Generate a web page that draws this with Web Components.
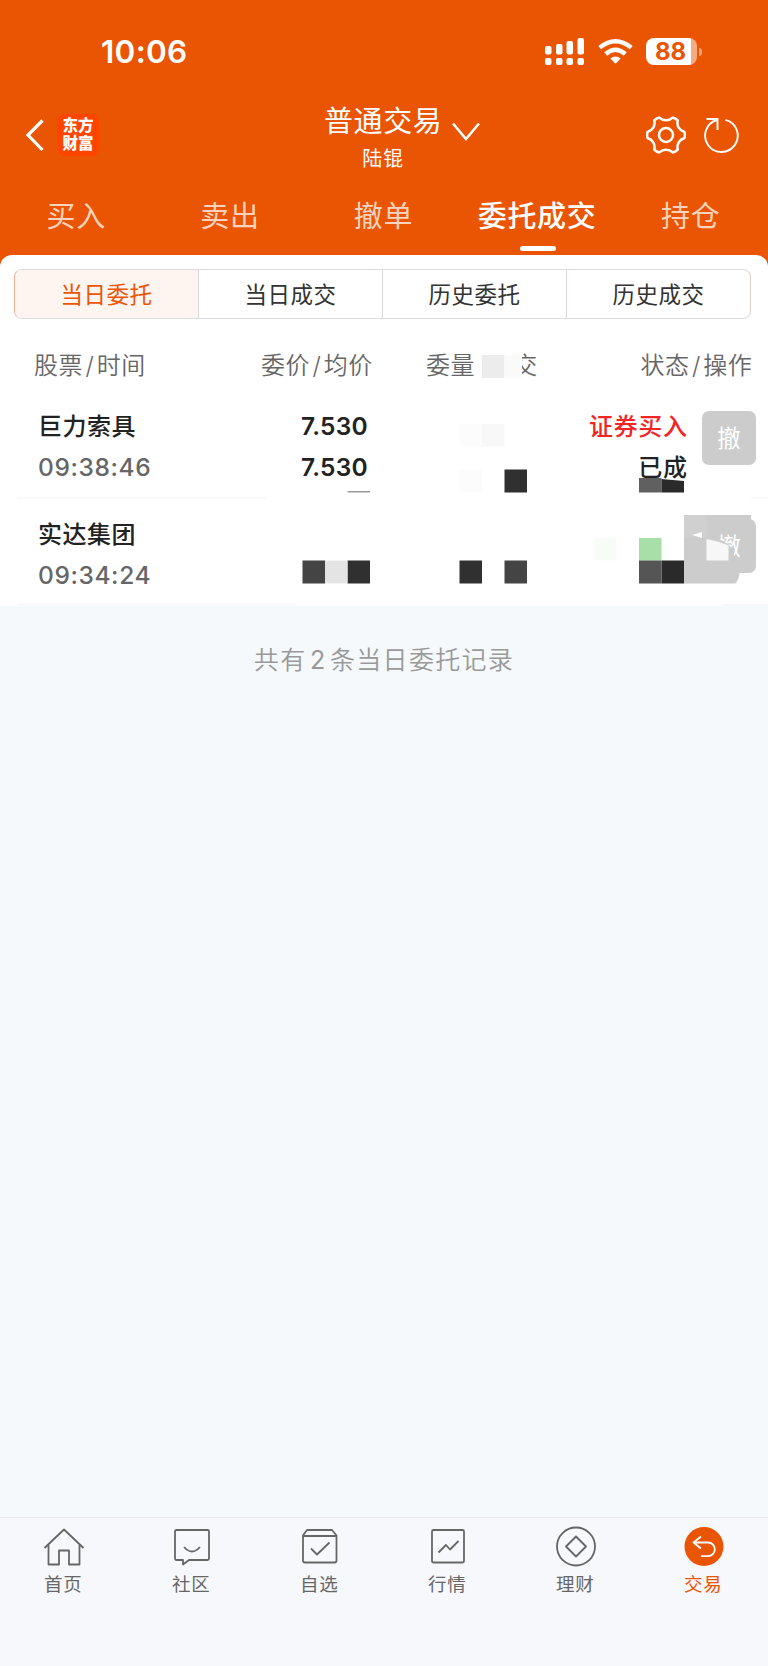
<!DOCTYPE html>
<html lang="zh-CN">
<head>
<meta charset="utf-8">
<title>普通交易</title>
<style>
    body {
        margin: 0;
        background: #f5f9fb;
        font-family: Inter, "Noto Sans CJK SC", sans-serif;
    }
</style>
</head>
<body>
<trade-app></trade-app>

<script>
// Small helper: every element clones its own template into an open root
class BaseElement extends HTMLElement {
    constructor() {
        super();
        const template = document.createElement('template');
        template.innerHTML = this.constructor.markup;
        this.attachShadow({ mode: 'open' });
        this.shadowRoot.appendChild(template.content.cloneNode(true));
    }
}

class StatusBar extends BaseElement {}
StatusBar.markup = `
  <style>
    :host {
        display: flex;
        align-items: center;
        justify-content: space-between;
        height: 103px;
        box-sizing: border-box;
        padding: 0 66px 0 101px;
        color: #fff;
    }
    .time {
        font-size: 31.5px;
        font-weight: 600;
        line-height: 40px;
        letter-spacing: 0.3px;
        padding-top: 1px;
    }
    .system { display: flex; align-items: center; gap: 13px; }
    svg { display: block; }
    .battery {
        display: flex;
        align-items: center;
        gap: 2px;
    }
    .level {
        width: 51px;
        height: 27px;
        border-radius: 8px;
        background: linear-gradient(90deg, #fff 44.5px, #f7ab80 44.5px);
        color: #ea5504;
        font-size: 24px;
        line-height: 28px;
        font-weight: 650;
        text-indent: 9px;
    }
    .nub { width: 3px; height: 8px; border-radius: 0 4px 4px 0; background: #f4a176; }
  </style>
  <span class="time">10:06</span>
  <div class="system">
    <svg width="40" height="27" viewBox="0 0 40 27" fill="#fff">
      <rect x="0" y="8" width="6.500" height="8.500" rx="2"/>
      <rect x="11" y="6" width="6.500" height="10.500" rx="2"/>
      <rect x="21.500" y="3" width="6.500" height="13.500" rx="2"/>
      <rect x="32.500" y="0" width="6.500" height="16.500" rx="2"/>
      <rect x="0" y="20" width="6.500" height="7" rx="2"/>
      <rect x="11" y="20" width="6.500" height="7" rx="2"/>
      <rect x="21.500" y="20" width="6.500" height="7" rx="2"/>
      <rect x="32.500" y="20" width="6.500" height="7" rx="2"/>
    </svg>
    <svg width="35" height="27" viewBox="0 0 35 27" fill="none" stroke="#fff" stroke-width="4.400">
      <path d="M1.700 9.600Q17.500 -3.200 33.300 9.600"/>
      <path d="M7.700 16Q17.500 7.600 27.300 16"/>
      <path d="M12.300 20.500Q17.500 16.300 22.700 20.500L17.500 25.800Z" fill="#fff" stroke="none"/>
    </svg>
    <div class="battery">
      <div class="level">88</div>
      <div class="nub"></div>
    </div>
  </div>
`;

// Six-lobed gear outline around (20, 20)
function gearPath() {
    const at = (r, deg) => {
        const a = deg * Math.PI / 180;
        return (20 + r * Math.cos(a)).toFixed(2) + ' ' + (20 + r * Math.sin(a)).toFixed(2);
    };
    let d = 'M' + at(18.7, -9);
    for (let a = 0; a < 360; a += 60) {
        d += 'Q' + at(19.3, a) + ' ' + at(18.7, a + 9);
        d += 'C' + at(16.8, a + 12) + ' ' + at(14.9, a + 20) + ' ' + at(14.7, a + 30);
        d += 'C' + at(14.9, a + 40) + ' ' + at(16.8, a + 48) + ' ' + at(18.7, a + 51);
    }
    return d + 'Z';
}

class NavHeader extends BaseElement {}
NavHeader.markup = `
  <style>
    :host {
        display: grid;
        grid-template-columns: 1fr auto 1fr;
        height: 78px;
        box-sizing: border-box;
        padding: 0 28px 0 25px;
        color: #fff;
    }
    svg { display: block; fill: none; stroke: #fff; }
    .left { display: flex; align-items: center; gap: 13px; padding-bottom: 14px; }
    .logo {
        width: 42px;
        height: 42px;
        box-sizing: border-box;
        padding-top: 3px;
        border-radius: 8px;
        background: #ff4400;
        font: 900 15.500px/18px "Liberation Sans", "Noto Sans CJK SC", sans-serif;
        text-align: center;
    }
    .center { width: 160px; display: flex; gap: 9.500px; margin-left: 4px; }
    .titles { margin-left: 19.500px; padding-top: 2px; text-align: center; white-space: nowrap; }
    .title { font-size: 29px; line-height: 34px; letter-spacing: 0.600px; }
    .account { font-size: 20px; line-height: 24px; letter-spacing: 1px; margin-top: 8px; }
    .center svg { margin-top: 19px; flex: none; }
    .right { display: flex; align-items: center; justify-content: flex-end; gap: 18.500px; padding-bottom: 14px; }
  </style>
  <div class="left">
    <svg width="19" height="34" viewBox="0 0 19 34" stroke-width="3.200"><path d="M17.500 2.500L3 17L17.500 32"/></svg>
    <div class="logo">东方<br>财富</div>
  </div>
  <div class="center">
    <div class="titles">
      <div class="title"><slot name="title"></slot></div>
      <div class="account"><slot name="account"></slot></div>
    </div>
    <svg width="28" height="20" viewBox="0 0 28 20" stroke-width="2.500"><path d="M1 1.500L14 17L27 1.500"/></svg>
  </div>
  <div class="right">
    <svg width="40" height="40" viewBox="0 0 40 40" stroke-width="2.500" stroke-linejoin="round">
      <path d="${gearPath()}"/>
      <circle cx="20" cy="20" r="7"/>
    </svg>
    <svg width="36" height="38" viewBox="0 0 36 38" stroke-width="1.900">
      <path d="M21.500 3.900A16.300 16.300 0 1 1 13 4"/>
      <path d="M2.500 3H13.500V14"/>
    </svg>
  </div>
`;

class PageTabs extends BaseElement {}
PageTabs.markup = `
  <style>
    :host { display: grid; grid-template-columns: repeat(5, 1fr); height: 74px; }
    ::slotted(span) {
        font-size: 29px;
        line-height: 71px;
        letter-spacing: 0.700px;
        text-align: center;
        white-space: nowrap;
        color: #fbd3bd;
        text-indent: -1px;
    }
    ::slotted(.active) {
        color: #fff;
        font-weight: 500;
    }
    .mark {
        grid-column: 4;
        width: 36px;
        height: 5.500px;
        margin: -8px auto 0;
        border-radius: 3px;
        background: #fff;
    }
  </style>
  <slot></slot>
  <div class="mark"></div>
`;

class SegmentControl extends BaseElement {}
SegmentControl.markup = `
  <style>
    :host {
        display: grid;
        grid-template-columns: 183px 184px 184px 1fr;
        height: 50px;
        box-sizing: border-box;
        margin: 0 17px 0 14px;
        border: 1.500px solid #dcdce2;
        border-left-color: #edaf90;
        border-right-color: #e0cfc8;
        border-radius: 8px;
        overflow: hidden;
    }
    ::slotted(span) {
        font-size: 22.500px;
        line-height: 49px;
        letter-spacing: 0.500px;
        text-align: center;
        color: #333;
        border-left: 1px solid #d9dae0;
    }
    ::slotted(.active) { color: #ea5504; background: #fef5f1; border-left: 0; }
  </style>
  <slot></slot>
`;

class OrderHead extends BaseElement {}
OrderHead.markup = `
  <style>
    :host {
        display: grid;
        grid-template-columns: 227px 165px 214.500px 1fr;
        height: 71px;
        box-sizing: border-box;
        padding: 12px 14px 0 34px;
        font-size: 24px;
        font-weight: 350;
        line-height: 70px;
        letter-spacing: 0.500px;
        color: #666;
        white-space: nowrap;
    }
    i { font-style: normal; padding: 0 2.500px; }
    .hidden { visibility: hidden; }
  </style>
  <span>股票<i>/</i>时间</span>
  <span>委价<i>/</i>均价</span>
  <span>委量<i class="hidden">/</i><span class="hidden">成</span>交</span>
  <span>状态<i>/</i>操作</span>
`;

class OrderRow extends BaseElement {}
OrderRow.markup = `
  <style>
    :host {
        display: grid;
        grid-template-columns: 263px 164px 1fr 54px;
        height: 107.500px;
        box-sizing: border-box;
        padding: 16px 12px 0 38px;
        font-size: 24px;
        line-height: 41px;
        color: #222;
        white-space: nowrap;
    }
    .name { font-weight: 500; letter-spacing: 0.500px; }
    .time { color: #666; font-weight: 500; font-size: 24.500px; letter-spacing: 0.600px; }
    .price { font-weight: 600; font-size: 24.500px; letter-spacing: 0.200px; }
    .state { text-align: right; padding-right: 14.500px; font-weight: 500; letter-spacing: 0.600px; }
    .side { color: #f22424; }
    button {
        width: 54px;
        height: 54px;
        margin: 5px 0 0;
        padding: 0 0 1px;
        border: 0;
        border-radius: 7px;
        background: #ccc;
        color: #fff;
        font: 400 23.500px/53px "Noto Sans CJK SC", sans-serif;
    }
  </style>
  <div>
    <div class="name"><slot name="name"></slot></div>
    <div class="time"><slot name="time"></slot></div>
  </div>
  <div class="price"><slot name="price"></slot></div>
  <div class="state">
    <div class="side"><slot name="side"></slot></div>
    <div><slot name="state"></slot></div>
  </div>
  <button>撤</button>
`;

// Censor blocks laid over the order list, origin at the panel's top left
class MosaicLayer extends BaseElement {}
MosaicLayer.markup = `
  <style>
    :host { position: absolute; left: 0; top: 0; pointer-events: none; }
    svg { display: block; }
  </style>
  <svg width="768" height="352" viewBox="0 255 768 352">
    <path fill="#fff" d="M477 350h45v30h-45z"/>
    <path fill="#ececec" d="M482 355h22.500v23H482z"/>
    <path fill="#fafafa" d="M504.500 355H522v23h-17.500z"/>
    <path fill="#fcfcfc" d="M459.500 424H482v22.500h-22.500zM459.500 469.500H482v23h-22.500z"/>
    <path fill="#f8f8f8" d="M482 424h22.500v22.500H482z"/>
    <path fill="#303030" d="M504.500 469.500H527v23h-22.500zM347.500 560.500H370v23h-22.500zM459.500 560.500H482v23h-22.500z"/>
    <path fill="#606060" d="M639 478h22.500v14.500H639z"/>
    <path fill="#2a2a2a" d="M661.500 479L684 481v11.500h-22.500zM661.500 560.500H684v23h-22.500z"/>
    <path fill="#999" d="M347.500 491H370v1.500h-22.500z"/>
    <path fill="#444" d="M302.500 560.500H325v23h-22.500zM504.500 560.500H527v23h-22.500z"/>
    <path fill="#e4e4e4" d="M325 560.500h22.500v23H325z"/>
    <path fill="#f7fdf6" d="M594 538h22.500v22.500H594z"/>
    <path fill="#a8dfa8" d="M639 538h22.500v22.500H639z"/>
    <path fill="#555" d="M639 560.500h22.500v23H639z"/>
    <path fill="#ccc" d="M684 515h67v10h-26l-7 13 10.500 7 5 4.500 1 11 1 12h4q0 6-4 11h-51.500z"/>
    <path fill="#d0d0d0" d="M684 515h22.500v22.500H684z"/>
    <path fill="#fff" d="M692 535l10-3v6z"/>
    <path fill="#f7f7f7" d="M706.500 539l13 3 9 3.500v15h-22z"/>
    <path fill="#f7f7f8" d="M17 497h249v1.500H17zM751 497h17v1.500h-17zM17 604h279v1.500H17zM721 604h47v2h-47z"/>
  </svg>
`;

class TabItem extends BaseElement {
    connectedCallback() {
        this.shadowRoot.querySelector('svg').innerHTML = TabItem.icons[this.getAttribute('icon')];
    }
}
TabItem.icons = {
    home: '<path d="M1.500 20L21 1.500L40.500 20M5.500 17V36.500H16V22.500H26V36.500H36.500V17"/>',
    chat: '<path d="M5.500 2H36.500Q38 2 38 3.500V30.500Q38 32 36.500 32H18L12 36.500V32H5.500Q4 32 4 30.500V3.500Q4 2 5.500 2Z"/><path d="M13 19Q21 28 29 19"/>',
    check: '<path d="M4 7.500L8 2H33L37.500 7.500V32.500Q37.500 34.500 35.500 34.500H6Q4 34.500 4 32.500ZM4 8H37.500M12 20.500L18 26.500L30.500 14.500"/>',
    chart: '<rect x="5" y="2" width="32" height="32.500" rx="1.500"/><path d="M11.500 24.500L19 17L23 21.500L31.500 13"/>',
    wealth: '<circle cx="21" cy="18.500" r="19"/><path d="M21 8.500L31 18.500L21 28.500L11 18.500Z"/>',
    trade: '<circle cx="21" cy="18.500" r="19.500" fill="#ea5504" stroke="none"/><path stroke="#fff" d="M18 8.500L10.500 14.500L18 20.500M11 14.500H25A6.800 6.800 0 0 1 25 28.200H18"/>'
};
TabItem.markup = `
  <style>
    :host {
        display: flex;
        flex-direction: column;
        align-items: center;
        padding-top: 10px;
        color: #666;
        font-size: 18.500px;
        line-height: 28px;
        letter-spacing: 0.800px;
    }
    :host([active]) { color: #ea5504; }
    svg { display: block; overflow: visible; fill: none; stroke: currentColor; stroke-width: 1.800; stroke-linejoin: round; }
    span { margin-top: 4px; margin-right: 1.500px; }
  </style>
  <svg width="42" height="38" viewBox="0 0 42 38"></svg>
  <span><slot></slot></span>
`;

class TabBar extends BaseElement {}
TabBar.markup = `
  <style>
    :host {
        display: grid;
        grid-template-columns: repeat(6, 1fr);
        height: 149px;
        box-sizing: border-box;
        border-top: 1.500px solid #e6eaec;
        background: #f7f8fb;
    }
  </style>
  <slot></slot>
`;

class TradeApp extends BaseElement {}
TradeApp.markup = `
  <style>
    :host { display: flex; flex-direction: column; height: 1666px; background: #f5f9fb; }
    header { height: 255px; flex: none; background: #ea5504; }
    .wrap { background: linear-gradient(#ea5504 20px, transparent 20px); }
    .panel {
        position: relative;
        height: 351px;
        box-sizing: border-box;
        padding-top: 14px;
        border-radius: 12px 12px 0 0;
        background: #fff;
    }
    .summary {
        flex: 1;
        padding-top: 34px;
        text-align: center;
        font-size: 25px;
        font-weight: 350;
        line-height: 40px;
        letter-spacing: 1.300px;
        color: #999;
    }
    .summary b { font-weight: 400; padding: 0 3.500px; }
  </style>
  <header>
    <status-bar></status-bar>
    <nav-header>
      <span slot="title">普通交易</span>
      <span slot="account">陆锟</span>
    </nav-header>
    <page-tabs>
      <span>买入</span>
      <span>卖出</span>
      <span>撤单</span>
      <span class="active">委托成交</span>
      <span>持仓</span>
    </page-tabs>
  </header>
  <div class="wrap">
    <div class="panel">
      <segment-control>
        <span class="active">当日委托</span>
        <span>当日成交</span>
        <span>历史委托</span>
        <span>历史成交</span>
      </segment-control>
      <order-head></order-head>
      <order-row>
        <span slot="name">巨力索具</span>
        <span slot="time">09:38:46</span>
        <span slot="price">7.530<br>7.530</span>
        <span slot="side">证券买入</span>
        <span slot="state">已成</span>
      </order-row>
      <order-row>
        <span slot="name">实达集团</span>
        <span slot="time">09:34:24</span>
      </order-row>
      <mosaic-layer></mosaic-layer>
    </div>
  </div>
  <div class="summary">共有<b>2</b>条当日委托记录</div>
  <tab-bar>
    <tab-item icon="home">首页</tab-item>
    <tab-item icon="chat">社区</tab-item>
    <tab-item icon="check">自选</tab-item>
    <tab-item icon="chart">行情</tab-item>
    <tab-item icon="wealth">理财</tab-item>
    <tab-item icon="trade" active>交易</tab-item>
  </tab-bar>
`;

customElements.define('status-bar', StatusBar);
customElements.define('nav-header', NavHeader);
customElements.define('page-tabs', PageTabs);
customElements.define('segment-control', SegmentControl);
customElements.define('order-head', OrderHead);
customElements.define('order-row', OrderRow);
customElements.define('mosaic-layer', MosaicLayer);
customElements.define('tab-item', TabItem);
customElements.define('tab-bar', TabBar);
customElements.define('trade-app', TradeApp);
</script>
</body>
</html>
